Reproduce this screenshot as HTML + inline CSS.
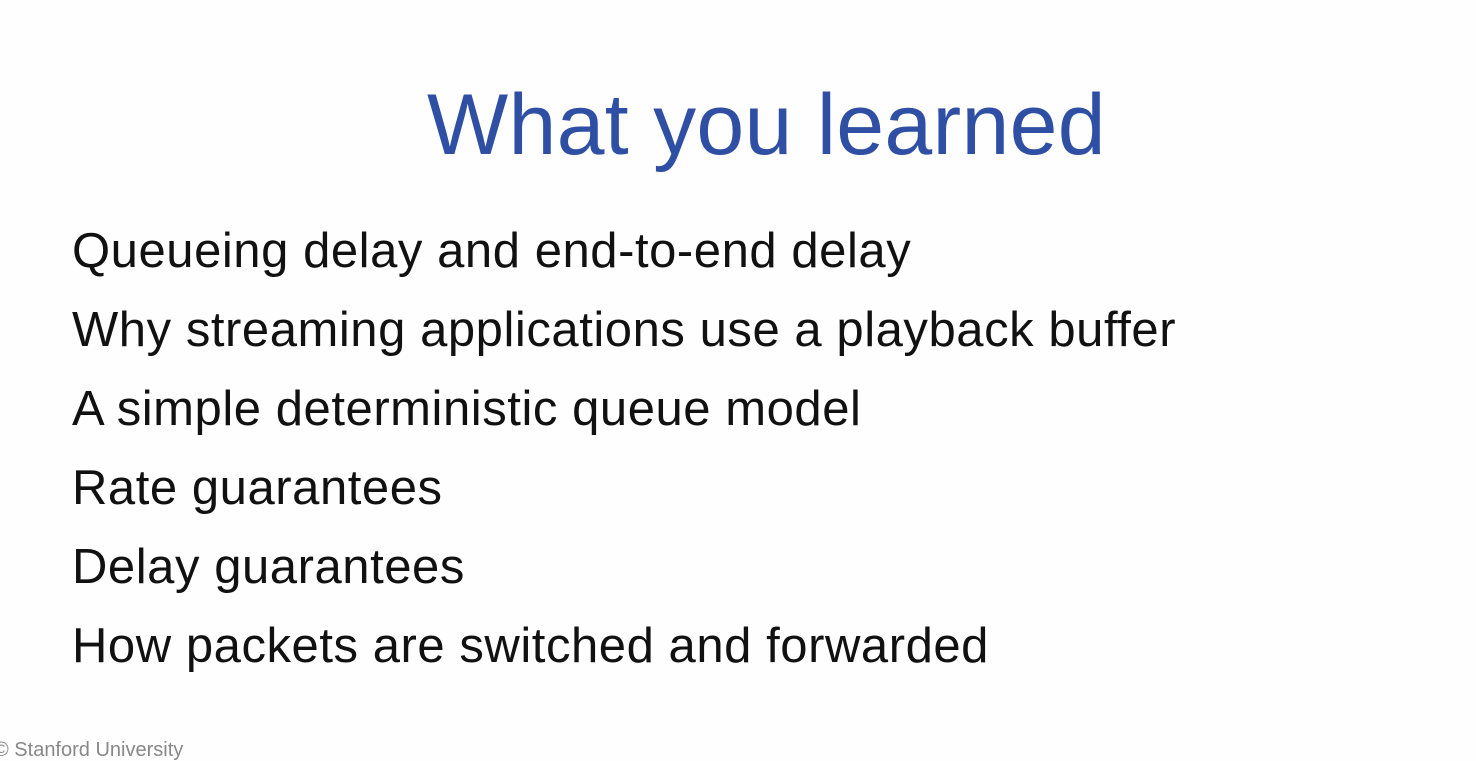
<!DOCTYPE html>
<html><head><meta charset="utf-8"><style>
html,body{margin:0;padding:0;background:#fefefe;}
body{width:1476px;height:748px;position:relative;overflow:hidden;font-family:"Liberation Sans",sans-serif;}
.t{position:absolute;left:427px;top:75px;font-size:86px;color:#2f4fa4;white-space:nowrap;line-height:100px;letter-spacing:0.3px;}
.l{position:absolute;left:72px;font-size:49px;color:#111;white-space:nowrap;line-height:60px;letter-spacing:0.55px;}
.f{position:absolute;left:-6px;top:740px;font-size:20px;color:#888;white-space:nowrap;line-height:20px;}
</style></head><body>
<div class="t">What you learned</div>
<div class="l" style="top:221px">Queueing delay and end-to-end delay</div>
<div class="l" style="top:300px">Why streaming applications use a playback buffer</div>
<div class="l" style="top:379px">A simple deterministic queue model</div>
<div class="l" style="top:458px">Rate guarantees</div>
<div class="l" style="top:537px">Delay guarantees</div>
<div class="l" style="top:616px">How packets are switched and forwarded</div>
<div class="f">© Stanford University</div>
</body></html>
